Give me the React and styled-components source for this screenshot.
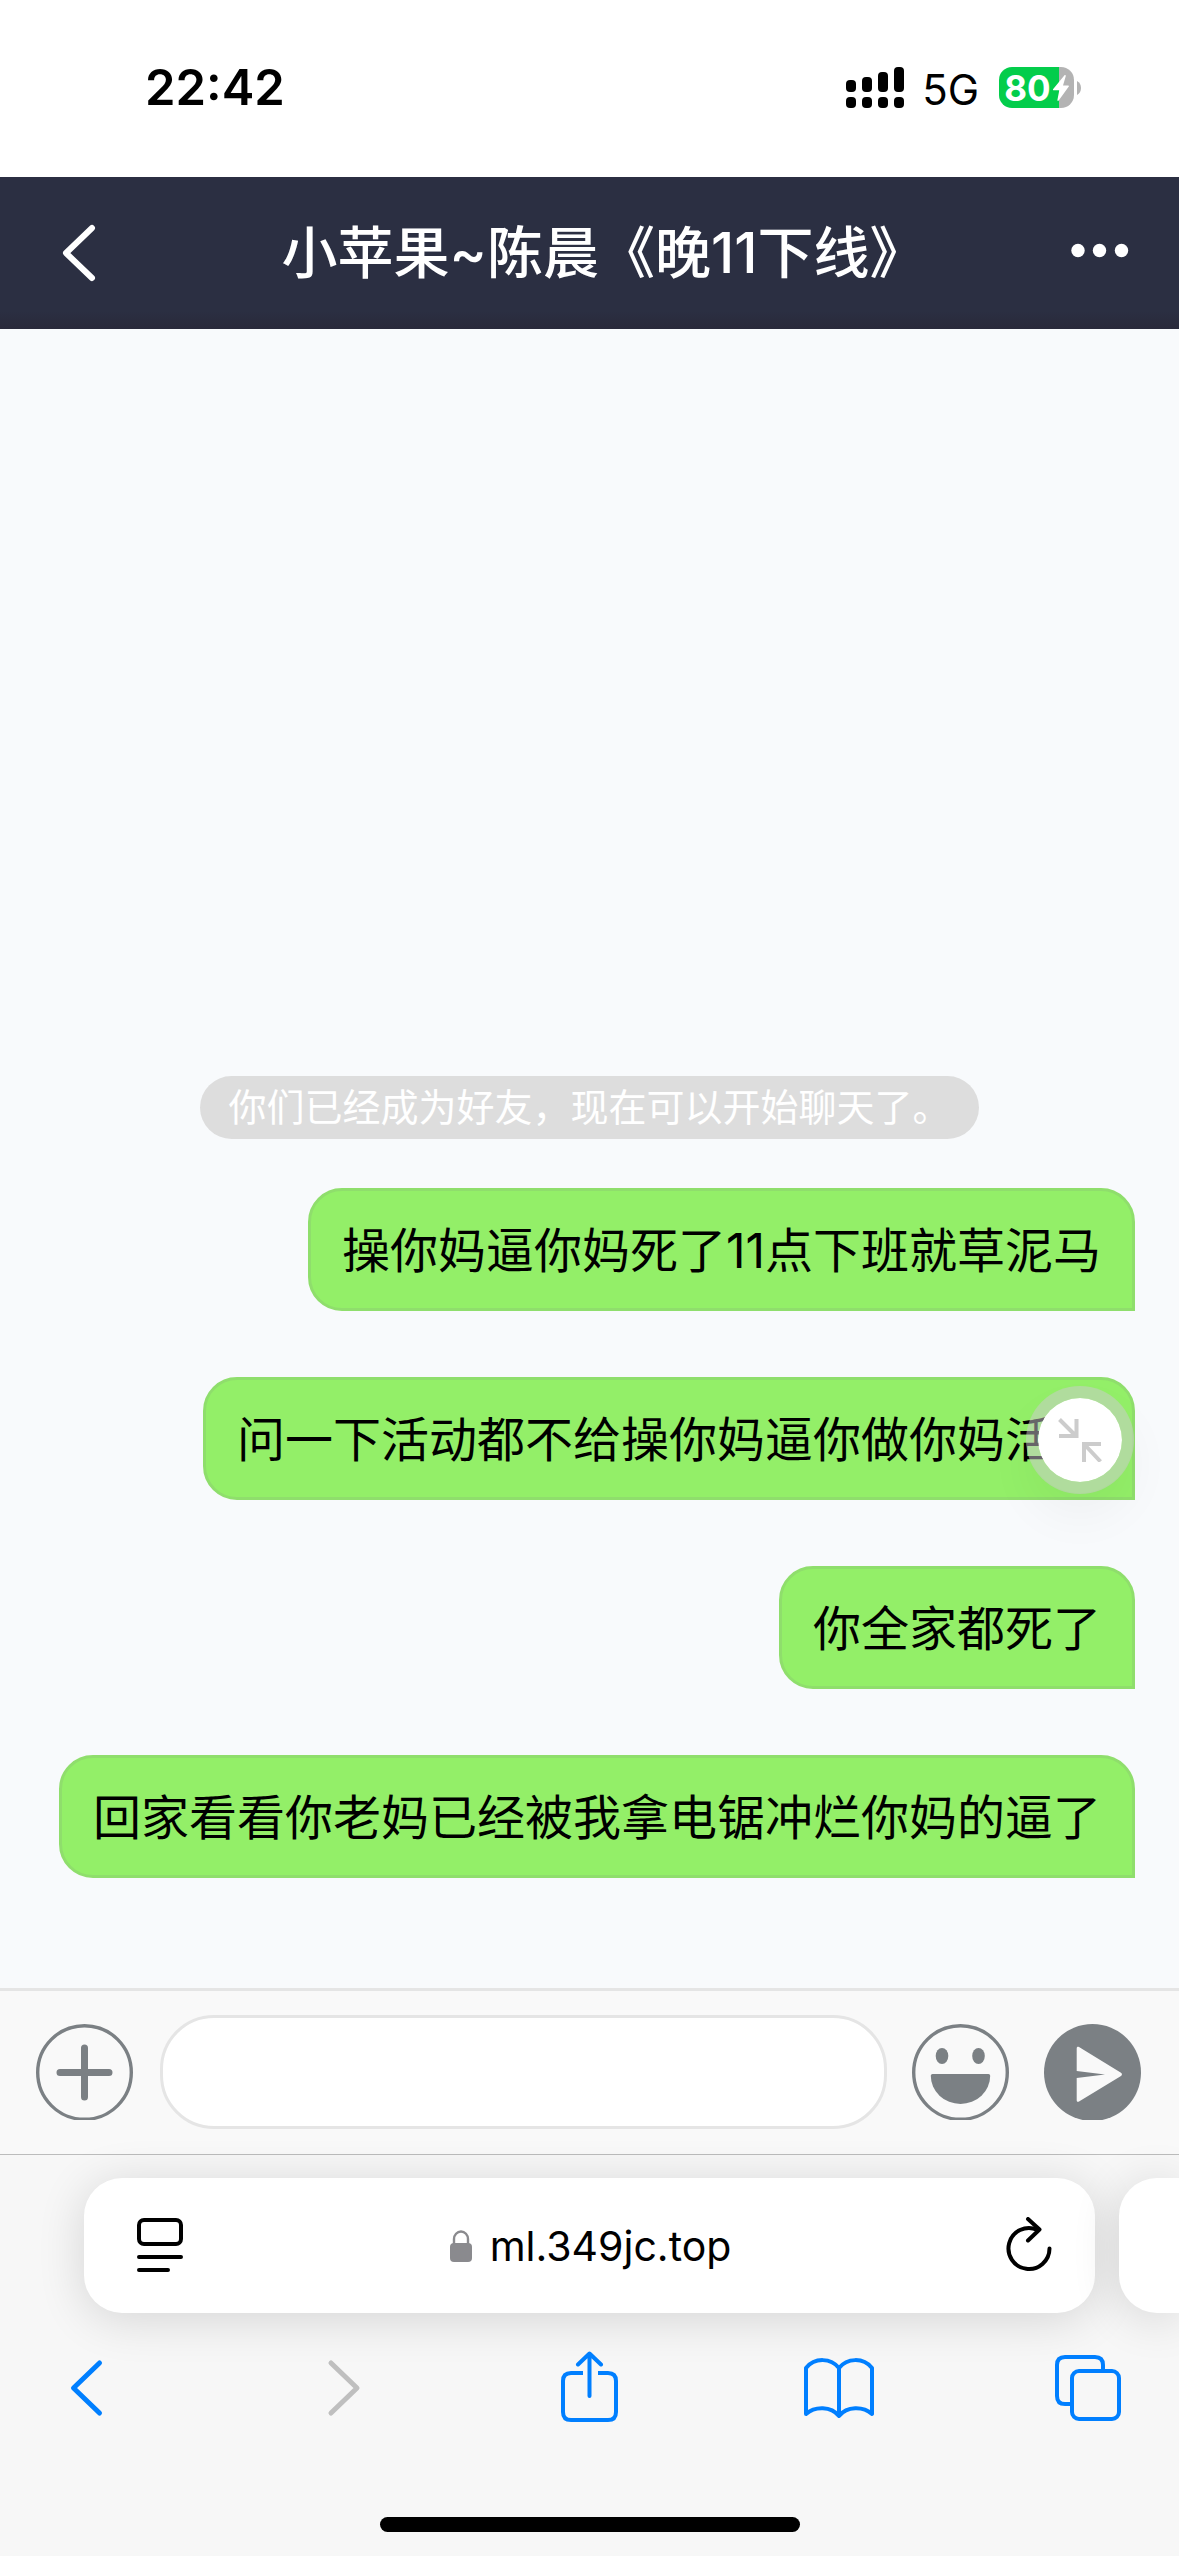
import React from "react";
import styled, { createGlobalStyle } from "styled-components";

const GlobalStyle = createGlobalStyle`
  * {
    box-sizing: border-box;
  }

  body {
    margin: 0;
    background: #f7f7f7;
    font-family: Inter, "Noto Sans CJK SC", sans-serif;
  }

  button {
    margin: 0;
    padding: 0;
    border: none;
    background: none;
    color: inherit;
    font: inherit;
    cursor: pointer;
  }

  svg {
    display: block;
    flex: none;
  }
`;

const Page = styled.div`
  display: flex;
  flex-direction: column;
  min-height: 100vh;
  overflow-x: hidden;
`;

/* status bar */

const StatusBar = styled.div`
  display: flex;
  justify-content: space-between;
  align-items: center;
  height: 177px;
  padding: 0 98px 2px 145px;
  background: #fff;
  color: #000;
`;

const Clock = styled.time`
  font-size: 49px;
  line-height: 60px;
  font-weight: 600;
`;

const StatusIcons = styled.div`
  display: flex;
  align-items: center;
`;

const Network = styled.span`
  margin: 0 20px 0 18px;
  padding-top: 4px;
  font-size: 42px;
  line-height: 48px;
`;

const Battery = styled.div`
  display: flex;
  align-items: center;
  justify-content: center;
  gap: 2px;
  width: 75px;
  height: 41px;
  margin-right: 3px;
  border-radius: 13px;
  background: linear-gradient(to right, #03cd4b 80%, #b3b3b3 80%);
  color: #fff;
  font-size: 35px;
  line-height: 40px;
  font-weight: 700;
`;

/* chat header */

const Header = styled.header`
  display: flex;
  justify-content: space-between;
  align-items: center;
  height: 152px;
  padding: 0 48px;
  background: linear-gradient(#2b2f42 88%, #29293a);
  color: #fff;
`;

const Title = styled.h1`
  margin: 0;
  padding-left: 28px;
  font-size: 56px;
  line-height: 72px;
  font-weight: 500;
`;

/* messages */

const Chat = styled.main`
  position: relative;
  flex: 1;
  display: flex;
  flex-direction: column;
  justify-content: flex-end;
  align-items: center;
  gap: 49px;
  padding: 0 44px 110px;
  background: #f8fafc;
`;

const Notice = styled.p`
  margin: 0;
  padding: 0 28px;
  border-radius: 32px;
  background: #ddd;
  color: #fff;
  font-size: 38px;
  line-height: 63px;
`;

const MessageList = styled.ul`
  display: flex;
  flex-direction: column;
  align-items: flex-end;
  gap: 66px;
  width: 100%;
  margin: 0;
  padding: 0;
  list-style: none;
`;

const Bubble = styled.li`
  padding: 25px 31px 23px;
  border: 3px solid #8fde6c;
  border-radius: 34px 34px 0 34px;
  background: #93ef68;
  color: #000;
  font-size: 48px;
  line-height: 69px;
`;

const FloatingButton = styled.button`
  position: absolute;
  right: 45px;
  bottom: 494px;
  display: flex;
  align-items: center;
  justify-content: center;
  width: 108px;
  height: 108px;
  border: 12px solid rgba(205, 202, 210, 0.5);
  border-radius: 50%;
  background: #fff padding-box;
  box-shadow: 0 24px 48px rgba(0, 0, 0, 0.04);
`;

/* composer */

const Composer = styled.form`
  display: flex;
  align-items: center;
  padding: 24px 38px 25px 36px;
  border-top: 3px solid #e5e5e5;
  background: #f9f9f9;
  color: #7b8084;
`;

const MessageInput = styled.input`
  flex: 1;
  min-width: 0;
  height: 114px;
  margin: 0 25px 0 27px;
  padding: 0 40px;
  border: 3px solid #e5e5e5;
  border-radius: 54px;
  outline: none;
  background: #fff;
  font: inherit;
  font-size: 48px;
`;

const SendButton = styled.button`
  margin-left: 35px;
`;

/* browser chrome */

const Browser = styled.footer`
  display: flex;
  flex-direction: column;
  padding: 23px 0 24px;
  border-top: 1px solid #bcbcbc;
  background: #f7f7f7;
`;

const AddressRow = styled.div`
  display: flex;
  gap: 24px;
  padding-left: 84px;
`;

const AddressBar = styled.div`
  flex: 1;
  display: flex;
  justify-content: space-between;
  align-items: center;
  height: 135px;
  padding: 0 43px 0 53px;
  border-radius: 38px;
  background: #fff;
  box-shadow: 0 6px 48px rgba(0, 0, 0, 0.14);
`;

const Address = styled.button`
  display: flex;
  align-items: center;
  gap: 18px;
  padding-right: 8px;
  color: #000;
  font-size: 41px;
  line-height: 52px;
`;

const NextTab = styled.button`
  width: 60px;
  border-radius: 38px 0 0 38px;
  background: #fff;
  box-shadow: 0 6px 48px rgba(0, 0, 0, 0.14);
`;

const Toolbar = styled.nav`
  display: flex;
  justify-content: space-between;
  padding: 38px 54px 0 51px;
  color: #007fff;
`;

const ToolButton = styled.button`
  color: ${props => (props.disabled ? "#bfbfbf" : "inherit")};
`;

const HomeIndicator = styled.div`
  align-self: center;
  width: 420px;
  height: 15px;
  margin-top: 94px;
  border-radius: 8px;
  background: #000;
`;

/* icons */

const Line = ({ width, height, weight = 4, children, ...rest }) => (
  <svg
    width={width}
    height={height}
    viewBox={`0 0 ${width} ${height}`}
    fill="none"
    stroke="currentColor"
    strokeWidth={weight}
    strokeLinecap="round"
    strokeLinejoin="round"
    aria-hidden="true"
    {...rest}
  >
    {children}
  </svg>
);

const SignalIcon = () => (
  <svg width="58" height="42" viewBox="0 0 58 42" aria-hidden="true">
    <rect x="0" y="13" width="10" height="12" rx="4" />
    <rect x="16" y="10" width="10" height="15" rx="4" />
    <rect x="32" y="5" width="10" height="20" rx="4" />
    <rect x="48" y="0" width="10" height="25" rx="4" />
    {[0, 16, 32, 48].map(x => (
      <rect key={x} x={x} y="30" width="10" height="11" rx="4" />
    ))}
  </svg>
);

const BoltIcon = () => (
  <svg width="16" height="26" viewBox="0 0 16 26" fill="#fff" aria-hidden="true">
    <path d="M11.5.3 0 14.2c-.4.6 0 1.1.6 1.1h5.7L4.4 25c-.1.9.8 1.2 1.3.6L15.8 11.5c.4-.6 0-1.1-.6-1.1H10L12.8 1c.2-.9-.8-1.3-1.3-.7z" />
  </svg>
);

const BatteryNub = () => (
  <svg width="4" height="14" viewBox="0 0 4 14" fill="#b3b3b3" aria-hidden="true">
    <path d="M0 0c2.6 1.2 4 4 4 7s-1.4 5.8-4 7z" />
  </svg>
);

const BackIcon = () => (
  <Line width={60} height={64} weight={6}>
    <path d="M44 7 18 32l26 25" />
  </Line>
);

const MoreIcon = () => (
  <svg width="60" height="24" viewBox="0 0 60 24" fill="#fff" aria-hidden="true">
    <circle cx="7" cy="9.5" r="6.7" />
    <circle cx="28.5" cy="9.5" r="6.7" />
    <circle cx="50.5" cy="9.5" r="6.7" />
  </svg>
);

const ShrinkIcon = () => (
  <Line
    width={44}
    height={44}
    color="#ccc"
    strokeLinecap="butt"
    strokeLinejoin="miter"
  >
    <path d="M1.5 1.5 18 18M1 18h17.5V1M42.5 43.5 26 26M43 26H26v18" />
  </Line>
);

const PlusIcon = () => (
  <Line width={97} height={96} weight={7}>
    <circle cx="48.5" cy="48.5" r="46.8" strokeWidth="3.4" />
    <path d="M24 48.5h49M48.5 24v49" />
  </Line>
);

const SmileIcon = () => (
  <svg width="97" height="96" viewBox="0 0 97 96" fill="currentColor" aria-hidden="true">
    <circle cx="48.5" cy="48.5" r="46.8" fill="none" stroke="currentColor" strokeWidth="3.4" />
    <ellipse cx="30" cy="32" rx="6.3" ry="8" />
    <ellipse cx="66.5" cy="32" rx="6.3" ry="8" />
    <path d="M20.5 50h56q1.7 0 1.7 1.7a29.7 28.3 0 0 1-59.4 0q0-1.7 1.7-1.7z" />
  </svg>
);

const SendIcon = () => (
  <svg width="97" height="96" viewBox="0 0 97 96" fill="currentColor" aria-hidden="true">
    <circle cx="48.5" cy="48.5" r="48.5" />
    <path
      fill="#f9f9f9"
      d="M32.7 24.3c0-1.4 1.1-2 2.3-1.2l42 25.6c1.3.9 1.3 2.3 0 3.2L35 77.5c-1.2.8-2.3.2-2.3-1.2V54L61 50.5 32.7 47z"
    />
  </svg>
);

const ReaderIcon = () => (
  <Line width={46} height={55}>
    <rect x="2" y="2" width="42" height="24" rx="5" />
    <path d="M2 39h42M2 52h29" />
  </Line>
);

const LockIcon = () => (
  <svg width="22" height="32" viewBox="0 0 22 32" aria-hidden="true">
    <rect y="13" width="22" height="19" rx="4" fill="#8a8a8e" />
    <path d="M4 15V9a7 7.5 0 0 1 14 0v6" fill="none" stroke="#8a8a8e" strokeWidth="2.4" />
  </svg>
);

const ReloadIcon = () => (
  <Line width={46} height={58}>
    <path d="M43.5 31.500A20.500 20.500 0 1 1 31 12.600" />
    <path d="m22 2 11.500 10.500L22 23.500" />
  </Line>
);

const PrevIcon = () => (
  <Line width={72} height={72} weight={5}>
    <path d="M48.5 12 22.5 37l26 25" />
  </Line>
);

const NextIcon = () => (
  <Line width={72} height={72} weight={5}>
    <path d="m29 12 26 25-26 25" />
  </Line>
);

const ShareIcon = () => (
  <Line width={72} height={72} strokeLinecap="butt">
    <path d="M31 22H19q-8 0-8 8v31q0 8 8 8h37q8 0 8-8V30q0-8-8-8H46" />
    <path d="M37.5 45V3M26 13.5 37.5 2.5 49 13.5" strokeLinecap="round" />
  </Line>
);

const BookIcon = () => (
  <Line width={72} height={72}>
    <path d="M36 17C28 7 12 6 3 17v46c9-8 25-8 33 2 8-10 24-10 33-2V17C60 6 44 7 36 17zM36 17v47" />
  </Line>
);

const TabsIcon = () => (
  <Line width={72} height={72}>
    <rect x="19" y="20" width="47" height="48" rx="7" />
    <path d="M19 53h-7q-8 0-8-8V14q0-8 8-8h30q8 0 8 8v6" />
  </Line>
);

const messages = [
  "操你妈逼你妈死了11点下班就草泥马",
  "问一下活动都不给操你妈逼你做你妈活动",
  "你全家都死了",
  "回家看看你老妈已经被我拿电锯冲烂你妈的逼了"
];

const tools = [
  { id: "back", label: "后退", Icon: PrevIcon },
  { id: "forward", label: "前进", Icon: NextIcon, disabled: true },
  { id: "share", label: "分享", Icon: ShareIcon },
  { id: "bookmarks", label: "书签", Icon: BookIcon },
  { id: "tabs", label: "标签页", Icon: TabsIcon }
];

const App = () => (
  <Page lang="zh-CN">
    <GlobalStyle />
    <StatusBar>
      <Clock>22:42</Clock>
      <StatusIcons>
        <SignalIcon />
        <Network>5G</Network>
        <Battery>
          80
          <BoltIcon />
        </Battery>
        <BatteryNub />
      </StatusIcons>
    </StatusBar>

    <Header>
      <button type="button" aria-label="返回">
        <BackIcon />
      </button>
      <Title>小苹果~陈晨《晚11下线》</Title>
      <button type="button" aria-label="更多">
        <MoreIcon />
      </button>
    </Header>

    <Chat>
      <Notice>你们已经成为好友，现在可以开始聊天了。</Notice>
      <MessageList>
        {messages.map(text => (
          <Bubble key={text}>{text}</Bubble>
        ))}
      </MessageList>
      <FloatingButton type="button" aria-label="收起">
        <ShrinkIcon />
      </FloatingButton>
    </Chat>

    <Composer onSubmit={e => e.preventDefault()}>
      <button type="button" aria-label="添加">
        <PlusIcon />
      </button>
      <MessageInput type="text" aria-label="消息" />
      <button type="button" aria-label="表情">
        <SmileIcon />
      </button>
      <SendButton type="submit" aria-label="发送">
        <SendIcon />
      </SendButton>
    </Composer>

    <Browser>
      <AddressRow>
        <AddressBar>
          <button type="button" aria-label="页面菜单">
            <ReaderIcon />
          </button>
          <Address type="button">
            <LockIcon />
            ml.349jc.top
          </Address>
          <button type="button" aria-label="刷新">
            <ReloadIcon />
          </button>
        </AddressBar>
        <NextTab type="button" aria-label="下一个标签页" />
      </AddressRow>
      <Toolbar>
        {tools.map(({ id, label, Icon, disabled }) => (
          <ToolButton key={id} type="button" aria-label={label} disabled={disabled}>
            <Icon />
          </ToolButton>
        ))}
      </Toolbar>
      <HomeIndicator />
    </Browser>
  </Page>
);

export default App;
